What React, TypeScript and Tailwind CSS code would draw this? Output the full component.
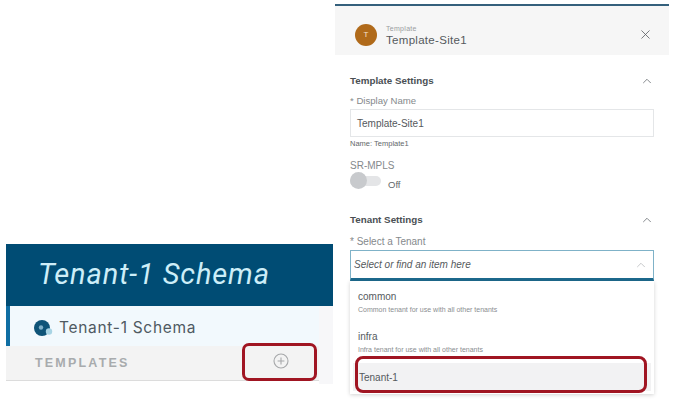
import { X, ChevronUp } from 'lucide-react';

function SectionTitle({ title }: { title: string }) {
  return (
    <div className="flex items-center justify-between pr-[15px]">
      <span className="text-[9.8px] leading-[14px] font-semibold text-[#4a4f54]">{title}</span>
      <ChevronUp size={14} strokeWidth={1.4} className="text-[#6b7074]" />
    </div>
  );
}

function TenantOption({ name, description }: { name: string; description: string }) {
  return (
    <div className="pl-[8px] h-[40px] pt-[9px]">
      <div className="text-[10px] leading-[14px] text-[#555a5e]">{name}</div>
      <div className="text-[7px] leading-[11px] text-[#8a8e91]">{description}</div>
    </div>
  );
}

function LeftPanel() {
  return (
    <div className="w-[333px] h-[402px] pl-[6px] pt-[244px] shrink-0">
      <div className="h-[62px] bg-[#004c74] flex items-center pl-[32px]">
        <span className="text-[29px] italic font-normal tracking-[0.9px] text-[#cdeef8]" style={{ fontFamily: 'Roboto' }}>
          Tenant-1 Schema
        </span>
      </div>
      <div className="flex h-[92px]">
        <div className="w-[313px]">
          <div className="h-[40px] bg-[#f2f9fd] border-l-[4px] border-[#0f6ea3] flex items-center pl-[24px] gap-[6px]">
            <svg width="19" height="16" viewBox="0 0 19 16" className="shrink-0 mt-[3px]">
              <circle cx="8" cy="8" r="8" fill="#0f5478" />
              <circle cx="7" cy="7.5" r="2.2" fill="#7fb0c8" />
              <circle cx="15" cy="11.5" r="3.2" fill="#a8d4e4" />
            </svg>
            <span className="mt-[3px] text-[15.5px] tracking-[0.7px] text-[#4f5a62]" style={{ fontFamily: 'Inter' }}>
              Tenant-1 Schema
            </span>
          </div>
          <div className="h-[35px] bg-[#f3f3f3] border-b border-[#dcdcdc] flex items-center justify-between pl-[29px] pr-[30px]">
            <span className="text-[12.5px] font-bold tracking-[2.2px] text-[#a8abad]">TEMPLATES</span>
            <svg width="16" height="16" viewBox="0 0 16 16" fill="none" stroke="#a6a8aa" strokeWidth="1.1" className="mb-[4px]">
              <circle cx="8" cy="8" r="7" />
              <path d="M8 4.6v6.8M4.6 8h6.8" />
            </svg>
          </div>
        </div>
        <div className="flex-1 h-[78px] bg-[#f7f7f9]" />
      </div>
    </div>
  );
}

function RightPanel() {
  return (
    <div className="w-[334px] ml-[2px] h-[402px] pt-[4px] shrink-0">
      <div className="h-[2px] bg-[#34607c]" />
      <div className="h-[49px] bg-[#f6f6f6] flex items-center pl-[20px] pr-[16px] pt-[8px]">
        <div className="w-[22px] h-[22px] rounded-full bg-[#b06a1a] flex items-center justify-center text-[8px] text-[#f5e3cc]">
          T
        </div>
        <div className="ml-[9px] flex-1 pt-[1px]">
          <div className="text-[7px] leading-[9px] tracking-[0.3px] text-[#9a9da0]">Template</div>
          <div className="text-[11.5px] leading-[14px] tracking-[0.3px] text-[#55595d]">Template-Site1</div>
        </div>
        <X size={15} strokeWidth={1.3} className="text-[#5a5e62]" />
      </div>

      <div className="pl-[15px] pt-[19px]">
        <SectionTitle title="Template Settings" />
        <div className="text-[9.6px] leading-[14px] mt-[6px] text-[#85898c]">* Display Name</div>
        <div className="mt-[1px] w-[304px] h-[28px] border border-[#e4e6e8] flex items-center pl-[6px] text-[10px] text-[#55595d]">
          Template-Site1
        </div>
        <div className="text-[7.5px] leading-[10px] mt-[2px] text-[#63676a]">Name: Template1</div>
        <div className="text-[10px] leading-[14px] mt-[10px] text-[#85898c]">SR-MPLS</div>
        <div className="flex items-center h-[16px]">
          <div className="relative w-[31px] h-[10px] rounded-full bg-[#e4e5e7]">
            <div className="absolute left-0 top-[-4px] w-[17px] h-[17px] rounded-full bg-[#c8cacd]" />
          </div>
          <span className="ml-[7px] mt-[8px] text-[9.5px] text-[#63676a]">Off</span>
        </div>

        <div className="mt-[24px]">
          <SectionTitle title="Tenant Settings" />
        </div>
        <div className="text-[10px] leading-[14px] mt-[8px] text-[#85898c]">* Select a Tenant</div>
        <div className="mt-[1px] w-[304px] h-[31px] border border-[#7fb2c8] border-b-[3px] border-b-[#1d6a8e] flex items-center justify-between pl-[3px] pr-[5px]">
          <span className="text-[10px] italic text-[#55595d]">Select or find an item here</span>
          <ChevronUp size={14} strokeWidth={1.3} className="text-[#b5b8ba]" />
        </div>
        <div className="w-[304px] h-[113px] bg-white shadow-[0_1px_4px_rgba(0,0,0,0.18)]">
          <TenantOption name="common" description="Common tenant for use with all other tenants" />
          <TenantOption name="infra" description="Infra tenant for use with all other tenants" />
          <div className="h-[28px] mt-[2px] mx-[3px] pl-[6px] bg-[#f2f2f3] flex items-center text-[10px] text-[#55595d]">
            Tenant-1
          </div>
        </div>
      </div>
    </div>
  );
}

export default function App() {
  return (
    <div className="relative w-[673px] h-[402px] overflow-hidden bg-white flex" style={{ fontFamily: '"Liberation Sans", Arial, sans-serif' }}>
      <LeftPanel />
      <RightPanel />
      {/* red callouts */}
      <div className="absolute left-[242px] top-[343px] w-[75px] h-[38px] border-[3px] border-[#a01522] rounded-[7px]" />
      <div className="absolute left-[355px] top-[356px] w-[292px] h-[37px] border-[3px] border-[#a01522] rounded-[8px]" />
    </div>
  );
}
